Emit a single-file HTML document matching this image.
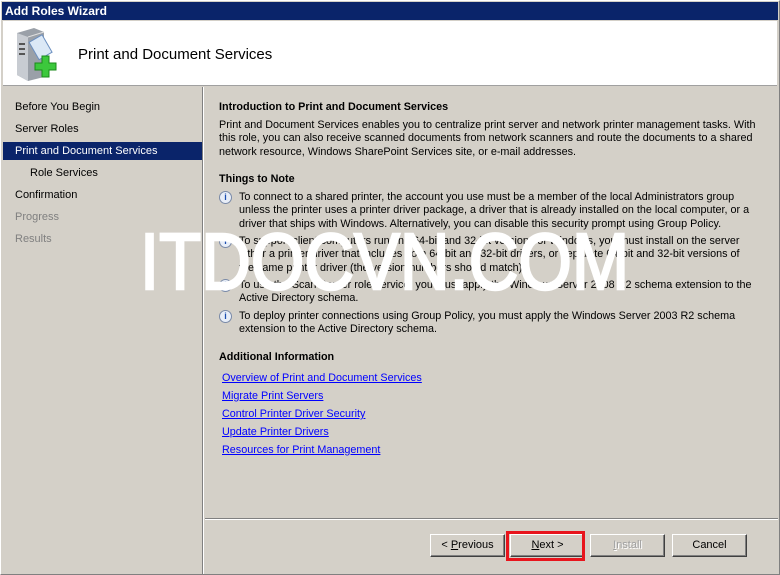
<!DOCTYPE html>
<html><head><style>
*{margin:0;padding:0;box-sizing:border-box}
body{width:780px;height:575px;background:#d4d0c8;font-family:"Liberation Sans",Tahoma,sans-serif;font-size:11px;color:#000;position:relative;overflow:hidden}
.frame{position:absolute;left:0;top:0;width:780px;height:575px;border:1px solid #808080;border-top-color:#fff;border-left-color:#fff}
.title{position:absolute;left:2px;top:2px;width:776px;height:18px;background:#0a246a;color:#fff;font-weight:bold;font-size:12px;line-height:18px;padding-left:3px}
.hdr{position:absolute;left:3px;top:21px;width:774px;height:65px;background:#fff;border-bottom:1px solid #a0a0a0}
.hdr h1{position:absolute;left:75px;top:25px;font-size:15px;font-weight:normal}
.nav{position:absolute;left:3px;top:87px;width:199px;height:485px}
.nav div{position:absolute;left:0;width:199px;height:18px;line-height:18px;padding-left:12px}
.sel{background:#0a246a;color:#fff}
.gray{color:#808080}
.vline{position:absolute;left:202px;top:87px;width:2px;height:487px;border-left:1px solid #808080;border-right:1px solid #fff}
.c{position:absolute;left:219px;line-height:13.3px;font-size:10.8px;white-space:nowrap}
.b{font-weight:bold}
a{color:#0000ff;text-decoration:underline}
.i{position:absolute;left:219px;width:13px;height:13px;border-radius:50%;border:1px solid #7a8aa8;background:#e8eef8;color:#1c4fb0;font-size:9px;font-weight:bold;text-align:center;line-height:11px}
.sep{position:absolute;left:205px;top:518px;width:573px;height:2px;border-top:1px solid #808080;border-bottom:1px solid #fff}
.btn{position:absolute;top:534px;height:23px;width:75px;border:1px solid;border-color:#fff #404040 #404040 #fff;box-shadow:inset -1px -1px #808080;text-align:center;line-height:21px;font-size:11px}
.wm{position:absolute;left:140px;top:222px;color:#fff;font-size:80px;font-weight:normal;line-height:80px;transform:scaleX(0.86);transform-origin:0 0;white-space:nowrap;-webkit-text-stroke:2.5px #fff}
</style></head><body>
<div class="frame"></div>
<div class="title">Add Roles Wizard</div>
<div class="hdr">
<svg style="position:absolute;left:11px;top:6px" width="50" height="54" viewBox="0 0 50 54">
<path d="M3 6 L20 1 L30 5 L30 50 L14 54 L3 48Z" fill="#9aa0a8"/>
<path d="M3 6 L14 10 L14 54 L3 48Z" fill="#c8ccd2"/>
<path d="M14 10 L30 5" stroke="#e0e0e0"/>
<rect x="5" y="16" width="6" height="2" fill="#555"/><rect x="5" y="21" width="6" height="2" fill="#555"/><rect x="5" y="26" width="6" height="2" fill="#555"/>
<rect x="19" y="10" width="15" height="20" transform="rotate(-30 27 20)" fill="#dbe8f6" stroke="#6b8fc0"/>
<path d="M28 29 h7 v7 h7 v7 h-7 v7 h-7 v-7 h-7 v-7 h7z" fill="#3cc83c" stroke="#1a8a1a"/>
</svg>
<h1>Print and Document Services</h1></div>
<div class="nav">
<div style="top:11px">Before You Begin</div>
<div style="top:33px">Server Roles</div>
<div class="sel" style="top:55px">Print and Document Services</div>
<div style="top:77px;padding-left:27px">Role Services</div>
<div style="top:99px">Confirmation</div>
<div class="gray" style="top:121px">Progress</div>
<div class="gray" style="top:143px">Results</div>
</div>
<div class="vline"></div>
<div class="c b" style="top:101px">Introduction to Print and Document Services</div>
<div class="c" style="top:119px">Print and Document Services enables you to centralize print server and network printer management tasks. With<br>this role, you can also receive scanned documents from network scanners and route the documents to a shared<br>network resource, Windows SharePoint Services site, or e-mail addresses.</div>
<div class="c b" style="top:173px">Things to Note</div>
<div class="i" style="top:191px">i</div>
<div class="c" style="left:239px;top:191px">To connect to a shared printer, the account you use must be a member of the local Administrators group<br>unless the printer uses a printer driver package, a driver that is already installed on the local computer, or a<br>driver that ships with Windows. Alternatively, you can disable this security prompt using Group Policy.</div>
<div class="i" style="top:235px">i</div>
<div class="c" style="left:239px;top:235px">To support client computers running 64-bit and 32-bit versions of Windows, you must install on the server<br>either a printer driver that includes both 64-bit and 32-bit drivers, or separate 64-bit and 32-bit versions of<br>the same printer driver (the version numbers should match).</div>
<div class="i" style="top:279px">i</div>
<div class="c" style="left:239px;top:279px">To use the Scan Server role service, you must apply the Windows Server 2008 R2 schema extension to the<br>Active Directory schema.</div>
<div class="i" style="top:310px">i</div>
<div class="c" style="left:239px;top:310px">To deploy printer connections using Group Policy, you must apply the Windows Server 2003 R2 schema<br>extension to the Active Directory schema.</div>
<div class="c b" style="top:351px">Additional Information</div>
<div class="c" style="left:222px;top:372px"><a>Overview of Print and Document Services</a></div>
<div class="c" style="left:222px;top:390px"><a>Migrate Print Servers</a></div>
<div class="c" style="left:222px;top:408px"><a>Control Printer Driver Security</a></div>
<div class="c" style="left:222px;top:426px"><a>Update Printer Drivers</a></div>
<div class="c" style="left:222px;top:444px"><a>Resources for Print Management</a></div>
<div class="wm">ITDOCVN.COM</div>
<div class="sep"></div>
<div class="btn" style="left:430px">&lt; <u>P</u>revious</div>
<div class="btn" style="left:510px"><u>N</u>ext &gt;</div>
<div style="position:absolute;left:506px;top:531px;width:79px;height:30px;border:3px solid #e8141c"></div>
<div class="btn" style="left:590px;color:#a0a0a0;text-shadow:1px 1px #fff"><u>I</u>nstall</div>
<div class="btn" style="left:672px">Cancel</div>
</body></html>
